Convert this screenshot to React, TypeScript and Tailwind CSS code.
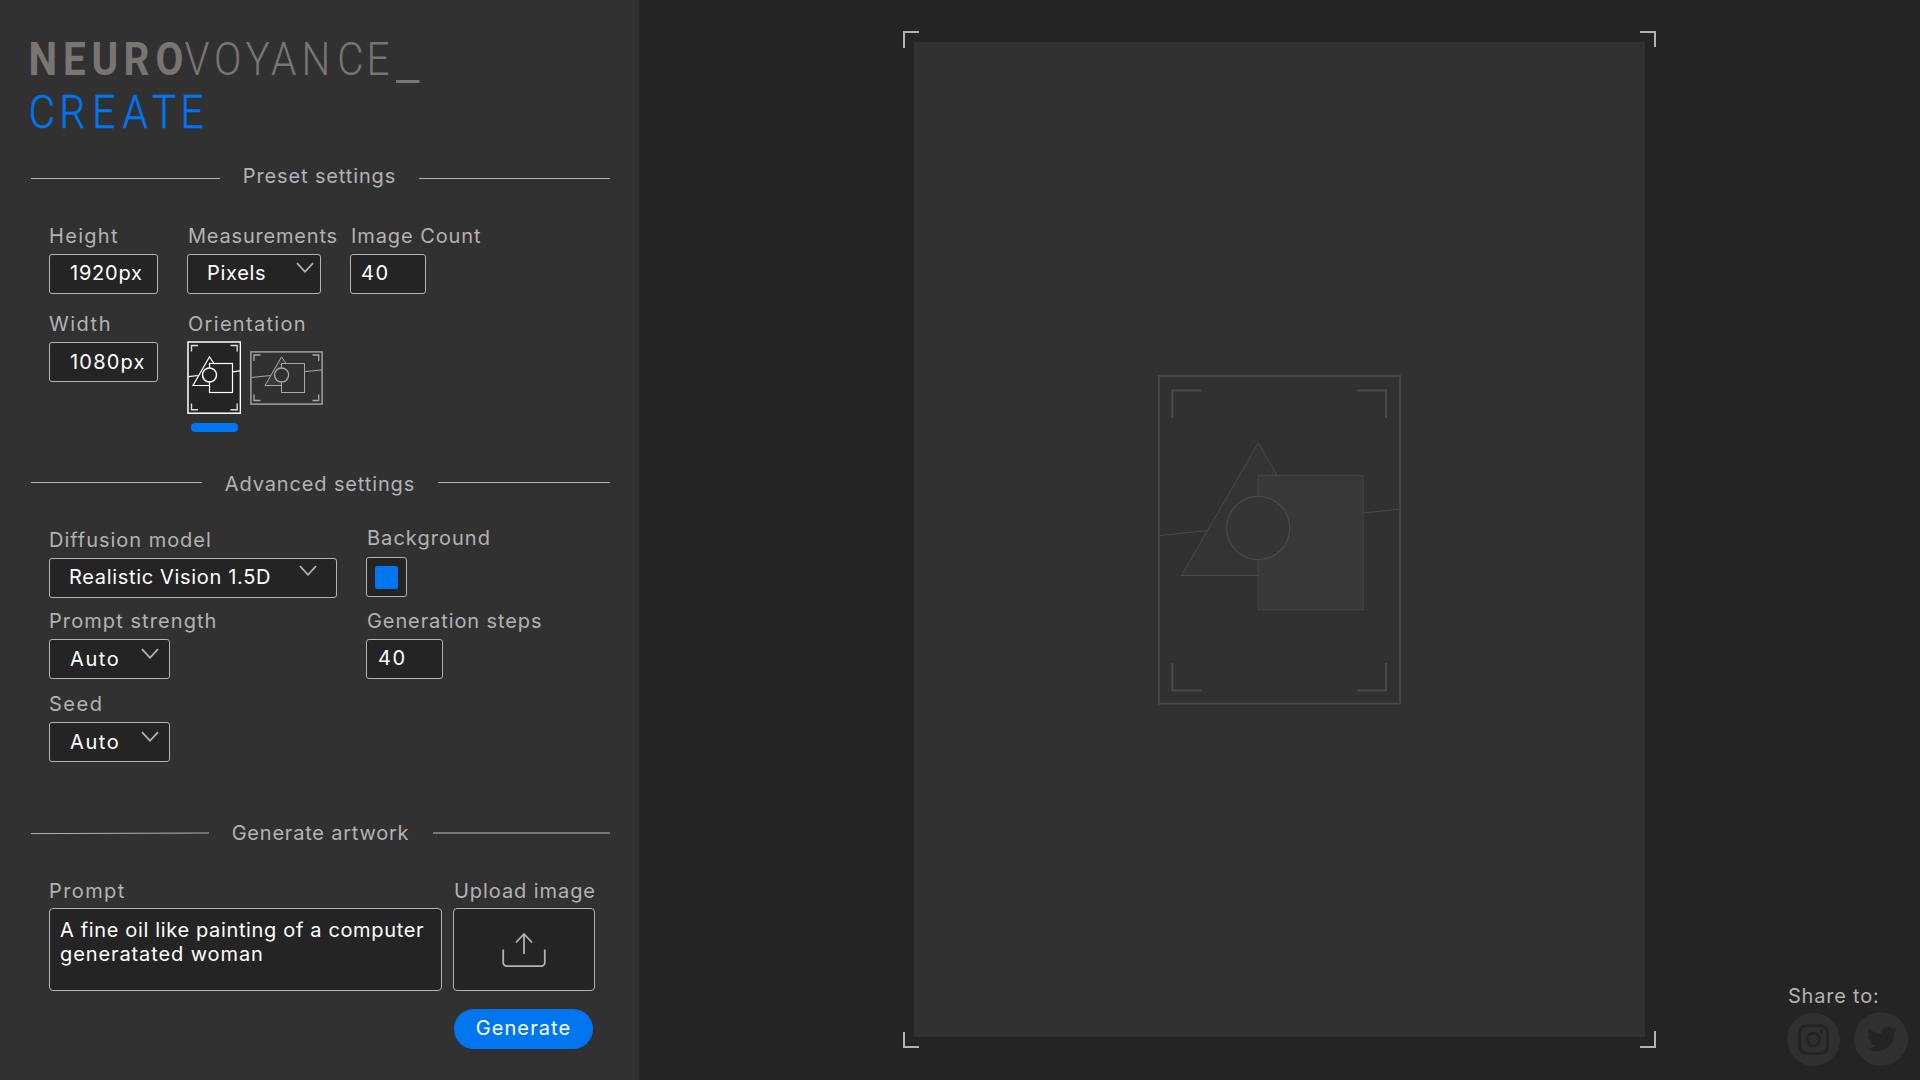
import type { ReactNode } from "react";
import clsx from "clsx";
import { FaTwitter } from "react-icons/fa";

function Logo() {
  return (
    <svg width="400" height="104" viewBox="31 36 400 104" className="overflow-visible font-[Roboto] text-[46px]">
      <g transform="scale(0.88 1)" className="fill-[#797573]">
        <text y="75.5" x="32.5 71.6 104.1 140.3 176.6" className="font-bold">
          NEURO
        </text>
        <text y="75" x="209.7 243.2 278.9 308 342.7 383.3 416.6" className="font-light">
          VOYANCE
        </text>
      </g>
      <rect x="396" y="80" width="23.5" height="3" className="fill-[#797573]" />
      <g transform="scale(0.88 1)" className="fill-[#0075f0] stroke-[#0075f0] stroke-[0.5px]">
        <text y="127.7" x="32.7 67.7 104.9 139.3 172.7 205.2" className="font-light">
          CREATE
        </text>
      </g>
    </svg>
  );
}

function Divider({ left, right, offset, children }: { left: ReactNode; right: string; offset: string; children: ReactNode }) {
  return (
    <div className="flex h-6 w-[579px] items-start justify-between">
      {left}
      {children}
      <div className={clsx("shrink-0", right, offset)} />
    </div>
  );
}

function Field({ label, tracking, gap = "gap-1.5", children }: { label: string; tracking: string; gap?: string; children: ReactNode }) {
  return (
    <div className={clsx("flex flex-col items-start", gap)}>
      <span className={clsx("whitespace-nowrap", tracking)}>{label}</span>
      {children}
    </div>
  );
}

function Box({ className, children }: { className: string; children: ReactNode }) {
  return (
    <div className={clsx("flex h-10 items-center justify-between rounded-[3px] border border-[#b3b3b3] bg-[#242424] whitespace-nowrap text-white", className)}>
      {children}
    </div>
  );
}

function Chevron({ className }: { className: string }) {
  return (
    <svg width="18" height="12" viewBox="0 0 18 12" className={clsx("shrink-0 self-start", className)} fill="none" stroke="#b3b3b3" strokeWidth="1.8">
      <path d="M1 1.2 9 9.8 17 1.2" />
    </svg>
  );
}

function PortraitIcon() {
  return (
    <svg width="54" height="73" viewBox="187 341 54 73" fill="none" stroke="#fff" strokeWidth="1.2">
      <rect x="188" y="342" width="52.4" height="71.2" fill="#242424" strokeWidth="1.5" />
      <path d="M191.5 351.5V345.5H198M230.5 345.5H237.2V351.5M191.5 403.5V409.8H198M230.5 409.8H237.2V403.5" strokeWidth="1.4" stroke="#ddd" />
      <path d="M188.5 376.7 198.5 375.5M232.5 371.8 240 370.8" />
      <path d="M214 363.5 209.5 356.8 193 385.5H209.5" />
      <rect x="209.5" y="363.5" width="23" height="29" />
      <circle cx="209.5" cy="375" r="7" fill="#242424" strokeWidth="1.5" />
    </svg>
  );
}

function LandscapeIcon() {
  return (
    <svg width="73" height="54" viewBox="250 351 73 54" className="mt-2.5" fill="none" stroke="#a8a8a8">
      <rect x="250.9" y="351.9" width="71.2" height="52.2" strokeWidth="1.4" />
      <path d="M254 361V355H260.5M312.5 355H318.7V361M254 394.5V400.5H260.5M312.5 400.5H318.7V394.5" strokeWidth="1.3" />
      <path d="M251.5 377.5 271 375.5M304.5 371.6 322 370" />
      <path d="M286 363.5 281.6 356.8 265 385.5H281.5" fill="#3a3a3a" />
      <rect x="281.5" y="363.5" width="23" height="29" fill="#313131" />
      <circle cx="281.6" cy="375" r="7" fill="#313131" strokeWidth="1.3" />
    </svg>
  );
}

function Placeholder() {
  return (
    <svg width="243" height="330" viewBox="1158 375 243 330" fill="none" stroke="#4a4a4a">
      <rect x="1159" y="376" width="241" height="327.7" strokeWidth="1.8" />
      <path d="M1172.3 418V390.4H1201.5M1357 390.4H1386V418M1172.3 663V690.5H1201.5M1357 690.5H1386V663" strokeWidth="2" />
      <path d="M1160 535.5 1207.5 530.5M1363 513 1399.5 509.3" />
      <path d="M1277 475.5 1258.3 442.7 1181.5 575.5H1258.3" fill="#343434" />
      <rect x="1258.3" y="475.5" width="104.7" height="134.2" fill="#383838" stroke="#444" strokeWidth="1.2" />
      <circle cx="1258.2" cy="528" r="31.6" fill="#353535" strokeWidth="1.3" />
    </svg>
  );
}

function CanvasArea() {
  return (
    <div className="relative mt-[31px] ml-[264px] flex h-[1017px] w-[753px] px-[11px] pt-[11px] pb-[11px]">
      <div className="absolute top-0 left-0 h-[17px] w-4 border-t-2 border-l-2 border-[#b3b3b3]" />
      <div className="absolute top-0 right-0 h-4 w-4 border-t-2 border-r-2 border-[#b3b3b3]" />
      <div className="absolute bottom-0 left-0 h-4 w-4 border-b-2 border-l-2 border-[#b3b3b3]" />
      <div className="absolute right-0 bottom-0 h-[17px] w-4 border-r-2 border-b-2 border-[#b3b3b3]" />
      <div className="flex flex-1 items-center justify-center bg-[#313131]">
        <Placeholder />
      </div>
    </div>
  );
}

function Share() {
  return (
    <div className="mt-auto mb-[13px] flex flex-col pl-[131px] text-[#b3b3b3]">
      <span className="pl-px tracking-[0.79px]">Share to:</span>
      <div className="mt-1 mb-px flex h-[54px] items-center gap-3.5">
        <div className="mt-px flex size-[53px] items-center justify-center rounded-full bg-[#303030]">
          <svg width="31" height="31" viewBox="0 0 31 31" fill="none" stroke="#242424" strokeWidth="2.8">
            <rect x="1.5" y="1.5" width="28" height="28" rx="7.5" />
            <circle cx="15.5" cy="15.5" r="6.4" />
            <circle cx="23.5" cy="7.5" r="1.8" fill="#242424" stroke="none" />
          </svg>
        </div>
        <div className="flex size-[54px] items-center justify-center rounded-full bg-[#303030]">
          <FaTwitter size={30} color="#242424" className="ml-0.5" />
        </div>
      </div>
    </div>
  );
}

export default function App() {
  return (
    <div className="flex h-[1080px] w-[1920px] overflow-hidden bg-[#242424] font-[Inter,sans-serif] text-[20px] leading-6 text-[#b3b3b3]">
      <aside className="flex w-[639px] flex-col bg-[#313131] pt-9 pl-[31px]">
        <Logo />

        <div className="mt-6">
          <Divider left={<div className="mt-3.5 h-px w-[189px] bg-[#b3b3b3]" />} right="h-px w-[191px] bg-[#b3b3b3]" offset="mt-3.5">
            <span className="tracking-[0.87px]">Preset settings</span>
          </Divider>
        </div>

        <div className="mt-9 ml-[18px] grid grid-cols-[138px_163px_auto] gap-y-[18px]">
          <Field label="Height" tracking="tracking-[1.31px]">
            <Box className="w-[109px] pb-0.5 pl-5">
              <span className="tracking-[0.77px]">1920px</span>
            </Box>
          </Field>
          <Field label="Measurements" tracking="pl-px tracking-[0.8px]">
            <Box className="w-[134px] pr-[6px] pb-0.5 pl-[19px]">
              <span className="tracking-[0.7px]">Pixels</span>
              <Chevron className="mt-[7px]" />
            </Box>
          </Field>
          <Field label="Image Count" tracking="pl-px tracking-[0.91px]">
            <Box className="w-[76px] pb-0.5 pl-2.5">
              <span className="tracking-[1.5px]">40</span>
            </Box>
          </Field>
          <Field label="Width" tracking="tracking-[1.5px]">
            <Box className="w-[109px] pl-5">
              <span className="tracking-[1.2px]">1080px</span>
            </Box>
          </Field>
          <Field label="Orientation" tracking="pl-px tracking-[1.3px]" gap="gap-[5px]">
            <div className="flex items-start gap-[9px]">
              <div className="flex flex-col items-center">
                <PortraitIcon />
                <div className="mt-[9px] h-[9px] w-[47px] rounded bg-[#0075f0]" />
              </div>
              <LandscapeIcon />
            </div>
          </Field>
        </div>

        <div className="mt-10">
          <Divider left={<div className="mt-2.5 h-px w-[171px] bg-[#b3b3b3]" />} right="h-px w-[172px] bg-[#b3b3b3]" offset="mt-2.5">
            <span className="tracking-[0.87px]">Advanced settings</span>
          </Divider>
        </div>

        <div className="mt-8 ml-[18px] flex">
          <div className="flex w-[317px] flex-col">
            <Field label="Diffusion model" tracking="tracking-[0.97px]">
              <Box className="w-[288px] pr-[19px] pb-0.5 pl-[19px]">
                <span className="tracking-[0.67px]">Realistic Vision 1.5D</span>
                <Chevron className="mt-[6px]" />
              </Box>
            </Field>
            <div className="mt-[11px]">
              <Field label="Prompt strength" tracking="tracking-[1.08px]">
                <Box className="w-[121px] pr-2.5 pb-px pl-5">
                  <span className="tracking-[1.6px]">Auto</span>
                  <Chevron className="mt-2" />
                </Box>
              </Field>
            </div>
            <div className="mt-[13px]">
              <Field label="Seed" tracking="tracking-[1.5px]">
                <Box className="w-[121px] pr-2.5 pb-px pl-5">
                  <span className="tracking-[1.6px]">Auto</span>
                  <Chevron className="mt-2" />
                </Box>
              </Field>
            </div>
          </div>
          <div className="-mt-0.5 flex flex-col">
            <Field label="Background" tracking="pl-px tracking-[1.03px]" gap="gap-[7px]">
              <Box className="w-[41px] justify-center">
                <div className="h-[23px] w-[23px] shrink-0 rounded-[2px] bg-[#0075f0] mx-auto" />
              </Box>
            </Field>
            <div className="mt-3">
              <Field label="Generation steps" tracking="pl-px tracking-[0.9px]">
                <Box className="w-[77px] pb-[3px] pl-[11px]">
                  <span className="tracking-[1.5px]">40</span>
                </Box>
              </Field>
            </div>
          </div>
        </div>

        <div className="mt-[59px]">
          <Divider
            left={
              <svg width="178" height="3" viewBox="0 0 178 3" className="mt-[11px]" stroke="#b3b3b3">
                <path d="M0 1.6 178 1" />
              </svg>
            }
            right="h-0.5 w-[177px] bg-[#757676]"
            offset="mt-[11px]"
          >
            <span className="-ml-px tracking-[0.78px]">Generate artwork</span>
          </Divider>
        </div>

        <div className="mt-[34px] ml-[18px] flex gap-[11px]">
          <Field label="Prompt" tracking="tracking-[1.4px]" gap="gap-[5px]">
            <div className="h-[83px] w-[393px] rounded border border-[#b3b3b3] bg-[#242424] pt-[9px] pl-2.5 text-white">
              <p className="tracking-[0.65px]">A fine oil like painting of a computer</p>
              <p className="tracking-[0.9px]">generatated woman</p>
            </div>
          </Field>
          <div className="flex flex-col">
            <Field label="Upload image" tracking="pl-px tracking-[0.93px]" gap="gap-[5px]">
              <div className="flex h-[83px] w-[142px] items-center justify-center rounded border border-[#b3b3b3] bg-[#242424]">
                <svg width="44" height="36" viewBox="0 0 44 36" fill="none" stroke="#b3b3b3" strokeWidth="1.8">
                  <path d="M1.2 17.5V30.5a3.6 3.6 0 0 0 3.6 3.6H39.2a3.6 3.6 0 0 0 3.6-3.6V17.5M22 22V2M14 10.5 22 2 30 10.5" />
                </svg>
              </div>
            </Field>
            <button className="mt-[18px] ml-px flex h-10 w-[139px] items-center justify-center rounded-full bg-[#0075f0] pb-[3px] text-white">
              <span className="tracking-[1.1px]">Generate</span>
            </button>
          </div>
        </div>
      </aside>

      <main className="flex flex-1">
        <CanvasArea />
        <Share />
      </main>
    </div>
  );
}
